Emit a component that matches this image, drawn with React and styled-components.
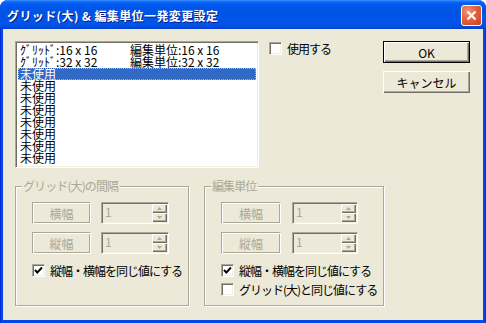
import React from "react"
import styled, { createGlobalStyle, css } from "styled-components"

const Global = createGlobalStyle`
    body {
        margin: 0;
        background: #fff;
    }
`;

const Window = styled.div`
    width: 486px;
    height: 323px;
    box-sizing: border-box;
    display: flex;
    flex-direction: column;
    background: linear-gradient(to right, #0019cf 0, #0846e8 1px, #0846e8 485px, #001ea0 486px);
    border-radius: 8px 8px 0 0;
    overflow: hidden;
    font-family: "Noto Sans CJK JP", sans-serif;
    font-size: 12px;
    color: #000;
`;

const TitleBar = styled.div`
    height: 29px;
    flex: none;
    display: flex;
    align-items: center;
    justify-content: space-between;
    padding: 0 4px 0 7px;
    box-sizing: border-box;
    background: linear-gradient(to bottom, #3d95ff 0, #0a66f6 2px, #0058ee 5px, #0054e3 14px, #0055eb 24px, #0047d6 28px, #003dc0 29px);
`;

const Title = styled.div`
    color: #fff;
    font-weight: bold;
    font-size: 12px;
    letter-spacing: 0.4px;
    text-shadow: 1px 1px 0 #0a1d8a;
    padding-top: 1px;
`;

const CloseButton = styled.div`
    width: 21px;
    height: 21px;
    box-sizing: border-box;
    border: 1px solid #fff;
    border-radius: 3px;
    background: radial-gradient(circle at 30% 30%, #f1957a 0, #e2623e 45%, #c8401a 100%);
    display: flex;
    align-items: center;
    justify-content: center;
    margin-top: 1px;
`;

const Client = styled.div`
    flex: 1;
    margin: 0 3px 3px;
    background: #ece9d8;
    padding: 12px 13px 0 12px;
    display: flex;
    flex-direction: column;
`;

const TopRow = styled.div`
    display: flex;
    align-items: flex-start;
`;

const ListBox = styled.div`
    width: 244px;
    height: 127px;
    box-sizing: border-box;
    background: #fff;
    border: 1px solid;
    border-color: #aca899 #fff #fff #aca899;
    box-shadow: inset 1px 1px 0 #716f64, inset -1px -1px 0 #f1efe2;
    padding: 2px 2px;
    overflow: hidden;
`;

const ListRow = styled.div`
    display: flex;
    height: 12px;
    line-height: 12px;
    padding-left: 2px;
    white-space: nowrap;
    box-sizing: border-box;
    ${p => p.$selected && css`
        background: #316ac5;
        color: #fff;
        outline: 1px dotted #e0b060;
        outline-offset: -1px;
    `}
`;

const Cell = styled.span`
    width: ${p => p.$width || "auto"};
    flex: none;
`;

const CheckRow = styled.label`
    display: flex;
    align-items: center;
    gap: 5px;
    height: 13px;
    white-space: nowrap;
    letter-spacing: -1px;
    margin: ${p => p.$margin || "0"};
`;

const Box = styled.span`
    width: 13px;
    height: 13px;
    flex: none;
    box-sizing: border-box;
    background: #fff;
    border: 1px solid;
    border-color: #aca899 #fff #fff #aca899;
    box-shadow: inset 1px 1px 0 #716f64, inset -1px -1px 0 #f1efe2;
    display: flex;
    align-items: center;
    justify-content: center;
`;

const ButtonColumn = styled.div`
    margin-left: auto;
    display: flex;
    flex-direction: column;
    gap: 8px;
`;

const Button = styled.div`
    width: 87px;
    height: 22px;
    box-sizing: border-box;
    display: flex;
    align-items: center;
    justify-content: center;
    background: #ece9d8;
    box-shadow: inset 1px 1px 0 #fff, inset -1px -1px 0 #716f64, inset -2px -2px 0 #aca899;
    ${p => p.$default && css`
        border: 1px solid #000;
    `}
`;

const BottomRow = styled.div`
    display: flex;
    gap: 15px;
    margin-top: 18px;
`;

const Group = styled.div`
    position: relative;
    width: ${p => p.$width}px;
    height: 120px;
    box-sizing: border-box;
    border: 1px solid #aca899;
    box-shadow: inset 1px 1px 0 #fff, 1px 1px 0 #fff;
    padding: 15px 0 0 16px;
    display: flex;
    flex-direction: column;
`;

const GroupTitle = styled.span`
    position: absolute;
    top: -8px;
    left: 6px;
    padding: 0 2px 0 1px;
    background: #ece9d8;
    color: #aca899;
    line-height: 14px;
    letter-spacing: -0.9px;
`;

const FieldRow = styled.div`
    display: flex;
    gap: ${p => p.$gap}px;
    margin-bottom: 8px;
`;

const LabelBox = styled.div`
    width: ${p => p.$width}px;
    height: 22px;
    box-sizing: border-box;
    border: 1px solid;
    border-color: #aca899 #fff #fff #aca899;
    box-shadow: inset 1px 1px 0 #fff, inset -1px -1px 0 #aca899;
    display: flex;
    align-items: center;
    justify-content: center;
    color: #aca899;
`;

const Edit = styled.div`
    width: ${p => p.$width}px;
    height: 22px;
    box-sizing: border-box;
    border: 1px solid;
    border-color: #aca899 #fff #fff #aca899;
    box-shadow: inset 1px 1px 0 #716f64, inset -1px -1px 0 #f1efe2;
    padding: 1px 1px 1px 3px;
    display: flex;
    align-items: flex-start;
    color: #aca899;
    line-height: 16px;
`;

const Spinner = styled.div`
    margin-left: auto;
    width: 15px;
    height: 18px;
    display: flex;
    flex-direction: column;
`;

const SpinButton = styled.div`
    flex: 1;
    background: #ece9d8;
    box-shadow: inset 1px 1px 0 #fff, inset -1px -1px 0 #716f64, inset -2px -2px 0 #aca899;
    display: flex;
    align-items: center;
    justify-content: center;
`;

const Checks = styled.div`
    display: flex;
    flex-direction: column;
    gap: 6px;
    margin-top: 2px;
`;

const Arrow = ({ up }) => (
    <svg width="5" height="3" viewBox="0 0 5 3">
        <polygon points={up ? "2.5,0 5,3 0,3" : "0,0 5,0 2.5,3"} fill="#aca899" />
    </svg>
);

const Check = ({ checked }) => (
    <Box>
        {checked && (
            <svg width="9" height="9" viewBox="0 0 9 9">
                <polyline points="1,4 3.3,6.5 8,1.5" fill="none" stroke="#000" strokeWidth="1.9" />
            </svg>
        )}
    </Box>
);

const Field = ({ label, labelWidth, editWidth, gap }) => (
    <FieldRow $gap={gap}>
        <LabelBox $width={labelWidth}>{label}</LabelBox>
        <Edit $width={editWidth}>
            1
            <Spinner>
                <SpinButton><Arrow up /></SpinButton>
                <SpinButton><Arrow /></SpinButton>
            </Spinner>
        </Edit>
    </FieldRow>
);

const rows = [
    ["ｸﾞﾘｯﾄﾞ:16 x 16", "編集単位:16 x 16"],
    ["ｸﾞﾘｯﾄﾞ:32 x 32", "編集単位:32 x 32"],
    ["未使用"], ["未使用"], ["未使用"], ["未使用"],
    ["未使用"], ["未使用"], ["未使用"], ["未使用"],
];

export default function App() {
    return (
        <>
            <Global />
            <Window>
                <TitleBar>
                    <Title>グリッド(大) &amp; 編集単位一発変更設定</Title>
                    <CloseButton>
                        <svg width="11" height="11" viewBox="0 0 11 11">
                            <path d="M1.5 1.5 L9.5 9.5 M9.5 1.5 L1.5 9.5" stroke="#fff" strokeWidth="2.2" />
                        </svg>
                    </CloseButton>
                </TitleBar>
                <Client>
                    <TopRow>
                        <ListBox>
                            {rows.map((r, k) => (
                                <ListRow key={k} $selected={k === 2}>
                                    <Cell $width={r[1] ? "110px" : "auto"}>{r[0]}</Cell>
                                    {r[1] && <Cell>{r[1]}</Cell>}
                                </ListRow>
                            ))}
                        </ListBox>
                        <CheckRow $margin="1px 0 0 10px">
                            <Check />
                            使用する
                        </CheckRow>
                        <ButtonColumn>
                            <Button $default>OK</Button>
                            <Button>キャンセル</Button>
                        </ButtonColumn>
                    </TopRow>
                    <BottomRow>
                        <Group $width={174}>
                            <GroupTitle>グリッド(大)の間隔</GroupTitle>
                            <Field label="横幅" labelWidth={59} editWidth={68} gap={10} />
                            <Field label="縦幅" labelWidth={59} editWidth={68} gap={10} />
                            <Checks>
                                <CheckRow>
                                    <Check checked />
                                    縦幅・横幅を同じ値にする
                                </CheckRow>
                            </Checks>
                        </Group>
                        <Group $width={180}>
                            <GroupTitle>編集単位</GroupTitle>
                            <Field label="横幅" labelWidth={60} editWidth={66} gap={11} />
                            <Field label="縦幅" labelWidth={60} editWidth={66} gap={11} />
                            <Checks>
                                <CheckRow>
                                    <Check checked />
                                    縦幅・横幅を同じ値にする
                                </CheckRow>
                                <CheckRow>
                                    <Check />
                                    グリッド(大)と同じ値にする
                                </CheckRow>
                            </Checks>
                        </Group>
                    </BottomRow>
                </Client>
            </Window>
        </>
    )
}
